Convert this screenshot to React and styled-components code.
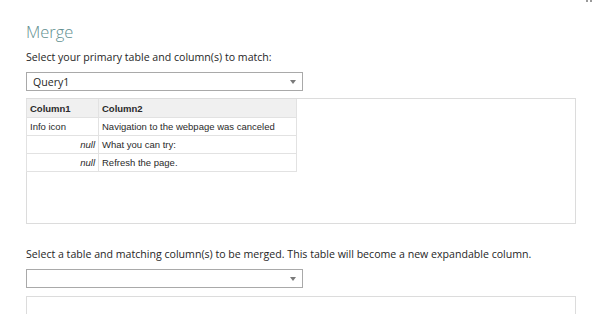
import React from "react";
import styled, { createGlobalStyle } from "styled-components";

const Global = createGlobalStyle`
  html, body { margin: 0; padding: 0; background: #ffffff; overflow: hidden; }
  body { font-family: "Open Sans", "Noto Sans", sans-serif; color: #252525; }
  * { box-sizing: border-box; }
`;

const Page = styled.div`
  position: relative;
  width: 600px;
  padding: 20px 24px 0 26px;
  display: flex;
  flex-direction: column;
  & > * { flex-shrink: 0; }
`;

const CornerMarks = styled.div`
  position: absolute;
  top: 0;
  right: 8px;
  display: flex;
  gap: 2px;
`;

const Mark = styled.span`
  width: 2px;
  height: 2px;
  background: #9a9a9a;
`;

const Title = styled.h1`
  margin: 0;
  font-family: "Open Sans", sans-serif;
  font-weight: 300;
  font-size: 16.5px;
  line-height: 24px;
  height: 24px;
  color: #5f8f8f;
`;

const Label = styled.div`
  margin-top: ${(p) => p.$top}px;
  font-family: "Open Sans", sans-serif;
  font-size: 10.6px;
  line-height: 15px;
  height: 15px;
  white-space: nowrap;
  color: #262626;
`;

const Select = styled.div`
  margin-top: 7px;
  width: 277px;
  height: 19px;
  border: 1px solid #a9a9a9;
  background: #fff;
  display: flex;
  align-items: center;
  justify-content: space-between;
  padding: 0 5px 0 6px;
  font-family: "Open Sans", sans-serif;
  font-size: 10.6px;
  color: #1f1f1f;
`;

const Arrow = styled.span`
  width: 0;
  height: 0;
  border-left: 3.5px solid transparent;
  border-right: 3.5px solid transparent;
  border-top: 4px solid #7a7a7a;
  margin-right: 1px;
`;

const Preview = styled.div`
  margin-top: ${(p) => p.$top}px;
  width: 550px;
  height: ${(p) => p.$h}px;
  border: 1px solid #dcdcdc;
  border-bottom: ${(p) => (p.$open ? "none" : "1px solid #dcdcdc")};
  background: #fff;
`;

const Grid = styled.div`
  display: grid;
  grid-template-columns: 73px 198px;
  font-family: "Liberation Sans", Arial, sans-serif;
  font-size: 9.5px;
  color: #2a2a2a;
  margin-left: -1px;
`;

const Cell = styled.div`
  height: ${(p) => (p.$head ? 19 : 18)}px;
  display: flex;
  align-items: center;
  justify-content: ${(p) => (p.$right ? "flex-end" : "flex-start")};
  padding: 0 3px 0 3px;
  background: ${(p) => (p.$head ? "#f0f0f0" : "#fff")};
  font-weight: ${(p) => (p.$head ? 700 : 400)};
  font-style: ${(p) => (p.$italic ? "italic" : "normal")};
  border-bottom: 1px solid #e2e2e2;
  border-right: 1px solid #e2e2e2;
  border-left: ${(p) => (p.$first ? "1px solid #e2e2e2" : "none")};
  white-space: nowrap;
`;

const rows = [
  ["Info icon", "Navigation to the webpage was canceled", false],
  ["null", "What you can try:", true],
  ["null", "Refresh the page.", true],
];

export default function App() {
  return (
    <>
      <Global />
      <Page>
        <CornerMarks>
          <Mark />
          <Mark />
        </CornerMarks>
        <Title>Merge</Title>
        <Label $top={6}>Select your primary table and column(s) to match:</Label>
        <Select>
          <span>Query1</span>
          <Arrow />
        </Select>
        <Preview $top={7} $h={126}>
          <Grid>
            <Cell $head $first>Column1</Cell>
            <Cell $head>Column2</Cell>
            {rows.map(([a, b, isNull], i) => (
              <React.Fragment key={i}>
                <Cell $first $right={isNull} $italic={isNull}>{a}</Cell>
                <Cell>{b}</Cell>
              </React.Fragment>
            ))}
          </Grid>
        </Preview>
        <Label $top={23}>
          Select a table and matching column(s) to be merged. This table will become a new expandable column.
        </Label>
        <Select>
          <span />
          <Arrow />
        </Select>
        <Preview $top={8} $h={19} $open />
      </Page>
    </>
  );
}
